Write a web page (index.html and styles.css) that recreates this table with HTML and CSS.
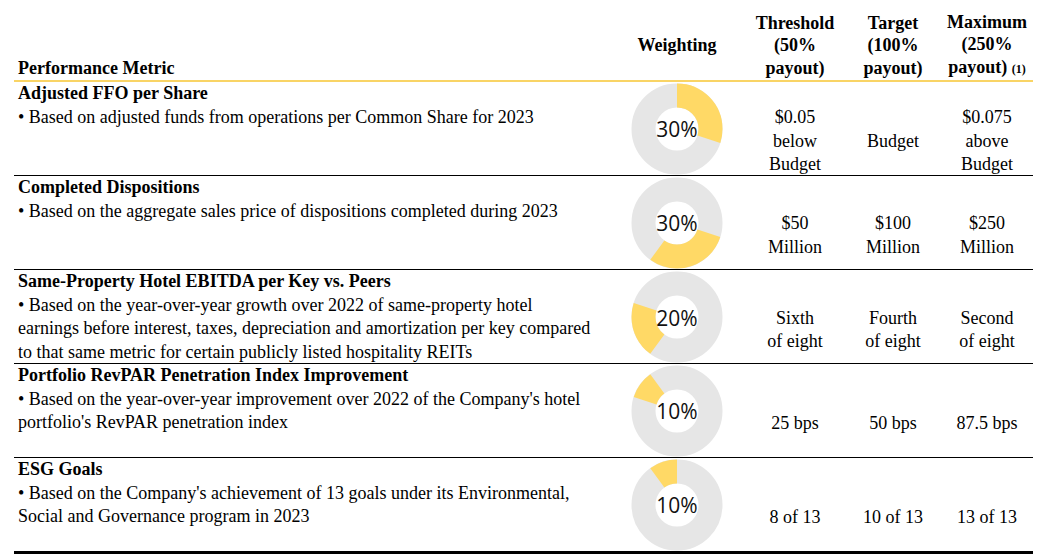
FILE: index.html
```html
<!DOCTYPE html>
<html lang="en">
<head>
<meta charset="utf-8">
<title>Performance Metrics</title>
<link rel="stylesheet" href="styles.css">
</head>
<body>
<div class="table">
  <div class="row head">
    <div class="cell metric head-metric">Performance Metric</div>
    <div class="cell center">Weighting</div>
    <div class="cell center">Threshold<br>(50%<br>payout)</div>
    <div class="cell center">Target<br>(100%<br>payout)</div>
    <div class="cell center">Maximum<br>(250%<br>payout) <span class="note">(1)</span></div>
  </div>

  <div class="row">
    <div class="cell metric">
      <div class="title">Adjusted FFO per Share</div>
      <div>• Based on adjusted funds from operations per Common Share for 2023</div>
    </div>
    <div class="cell weight">
      <div class="donut">
        <svg viewBox="0 0 92 92" width="92" height="92" aria-hidden="true">
          <circle class="ring" cx="46" cy="46" r="33.5"/>
          <circle class="slice" cx="46" cy="46" r="33.5" pathLength="100" stroke-dasharray="30 70" stroke-dashoffset="0" transform="rotate(-90 46 46)"/>
        </svg>
        <span class="pct">30%</span>
      </div>
    </div>
    <div class="cell val"><div>$0.05<br>below<br>Budget</div></div>
    <div class="cell val"><div>Budget</div></div>
    <div class="cell val"><div>$0.075<br>above<br>Budget</div></div>
  </div>

  <div class="row">
    <div class="cell metric">
      <div class="title">Completed Dispositions</div>
      <div>• Based on the aggregate sales price of dispositions completed during 2023</div>
    </div>
    <div class="cell weight">
      <div class="donut">
        <svg viewBox="0 0 92 92" width="92" height="92" aria-hidden="true">
          <circle class="ring" cx="46" cy="46" r="33.5"/>
          <circle class="slice" cx="46" cy="46" r="33.5" pathLength="100" stroke-dasharray="30 70" stroke-dashoffset="-30" transform="rotate(-90 46 46)"/>
        </svg>
        <span class="pct">30%</span>
      </div>
    </div>
    <div class="cell val"><div>$50<br>Million</div></div>
    <div class="cell val"><div>$100<br>Million</div></div>
    <div class="cell val"><div>$250<br>Million</div></div>
  </div>

  <div class="row">
    <div class="cell metric">
      <div class="title">Same-Property Hotel EBITDA per Key vs. Peers</div>
      <div>• Based on the year-over-year growth over 2022 of same-property hotel<br>earnings before interest, taxes, depreciation and amortization per key compared<br>to that same metric for certain publicly listed hospitality REITs</div>
    </div>
    <div class="cell weight">
      <div class="donut">
        <svg viewBox="0 0 92 92" width="92" height="92" aria-hidden="true">
          <circle class="ring" cx="46" cy="46" r="33.5"/>
          <circle class="slice" cx="46" cy="46" r="33.5" pathLength="100" stroke-dasharray="20 80" stroke-dashoffset="-60" transform="rotate(-90 46 46)"/>
        </svg>
        <span class="pct">20%</span>
      </div>
    </div>
    <div class="cell val"><div>Sixth<br>of eight</div></div>
    <div class="cell val"><div>Fourth<br>of eight</div></div>
    <div class="cell val"><div>Second<br>of eight</div></div>
  </div>

  <div class="row">
    <div class="cell metric">
      <div class="title">Portfolio RevPAR Penetration Index Improvement</div>
      <div>• Based on the year-over-year improvement over 2022 of the Company's hotel<br>portfolio's RevPAR penetration index</div>
    </div>
    <div class="cell weight">
      <div class="donut">
        <svg viewBox="0 0 92 92" width="92" height="92" aria-hidden="true">
          <circle class="ring" cx="46" cy="46" r="33.5"/>
          <circle class="slice" cx="46" cy="46" r="33.5" pathLength="100" stroke-dasharray="10 90" stroke-dashoffset="-80" transform="rotate(-90 46 46)"/>
        </svg>
        <span class="pct">10%</span>
      </div>
    </div>
    <div class="cell val"><div>25 bps</div></div>
    <div class="cell val"><div>50 bps</div></div>
    <div class="cell val"><div>87.5 bps</div></div>
  </div>

  <div class="row last">
    <div class="cell metric">
      <div class="title">ESG Goals</div>
      <div>• Based on the Company's achievement of 13 goals under its Environmental,<br>Social and Governance program in 2023</div>
    </div>
    <div class="cell weight">
      <div class="donut">
        <svg viewBox="0 0 92 92" width="92" height="92" aria-hidden="true">
          <circle class="ring" cx="46" cy="46" r="33.5"/>
          <circle class="slice" cx="46" cy="46" r="33.5" pathLength="100" stroke-dasharray="10 90" stroke-dashoffset="-90" transform="rotate(-90 46 46)"/>
        </svg>
        <span class="pct">10%</span>
      </div>
    </div>
    <div class="cell val"><div>8 of 13</div></div>
    <div class="cell val"><div>10 of 13</div></div>
    <div class="cell val"><div>13 of 13</div></div>
  </div>
</div>
</body>
</html>
```

FILE: styles.css
```css
html, body {
  margin: 0;
  padding: 0;
  background: #ffffff;
}

body {
  font-family: "Liberation Serif", "Times New Roman", serif;
  font-size: 18px;
  line-height: 23.5px;
  color: #000000;
}

.table {
  margin-left: 14px;
  width: 1019px;
}

.row {
  display: grid;
  grid-template-columns: 595px 136px 100px 96px 92px;
  height: 93px;
  border-bottom: 1px solid #000000;
}

.row.last {
  border-bottom: 3px solid #000000;
}

.head {
  height: auto;
  padding-top: 10.5px;
  line-height: 22.5px;
  font-weight: bold;
  border-bottom: 2px solid #f9d465;
}

.cell.center {
  text-align: center;
  align-self: center;
}

.head-metric {
  align-self: end;
  padding-bottom: 1px;
}

.note {
  font-size: 12px;
}

.metric {
  padding-left: 4px;
}

.title {
  font-weight: bold;
}

.weight {
  display: flex;
  justify-content: center;
  align-items: center;
}

.donut {
  display: grid;
  place-items: center;
  width: 92px;
  height: 92px;
}

.donut svg,
.donut .pct {
  grid-area: 1 / 1;
}

.donut svg {
  display: block;
}

.ring {
  fill: none;
  stroke: #e6e6e6;
  stroke-width: 24px;
}

.slice {
  fill: none;
  stroke: #ffd966;
  stroke-width: 24px;
}

.pct {
  font-family: "Open Sans", "DejaVu Sans", sans-serif;
  font-size: 21px;
  line-height: 1;
  color: #111111;
  padding-top: 2px;
}

.val {
  text-align: center;
  align-self: center;
}

.val > div {
  margin-top: 13px;
  margin-bottom: -13px;
}
```
